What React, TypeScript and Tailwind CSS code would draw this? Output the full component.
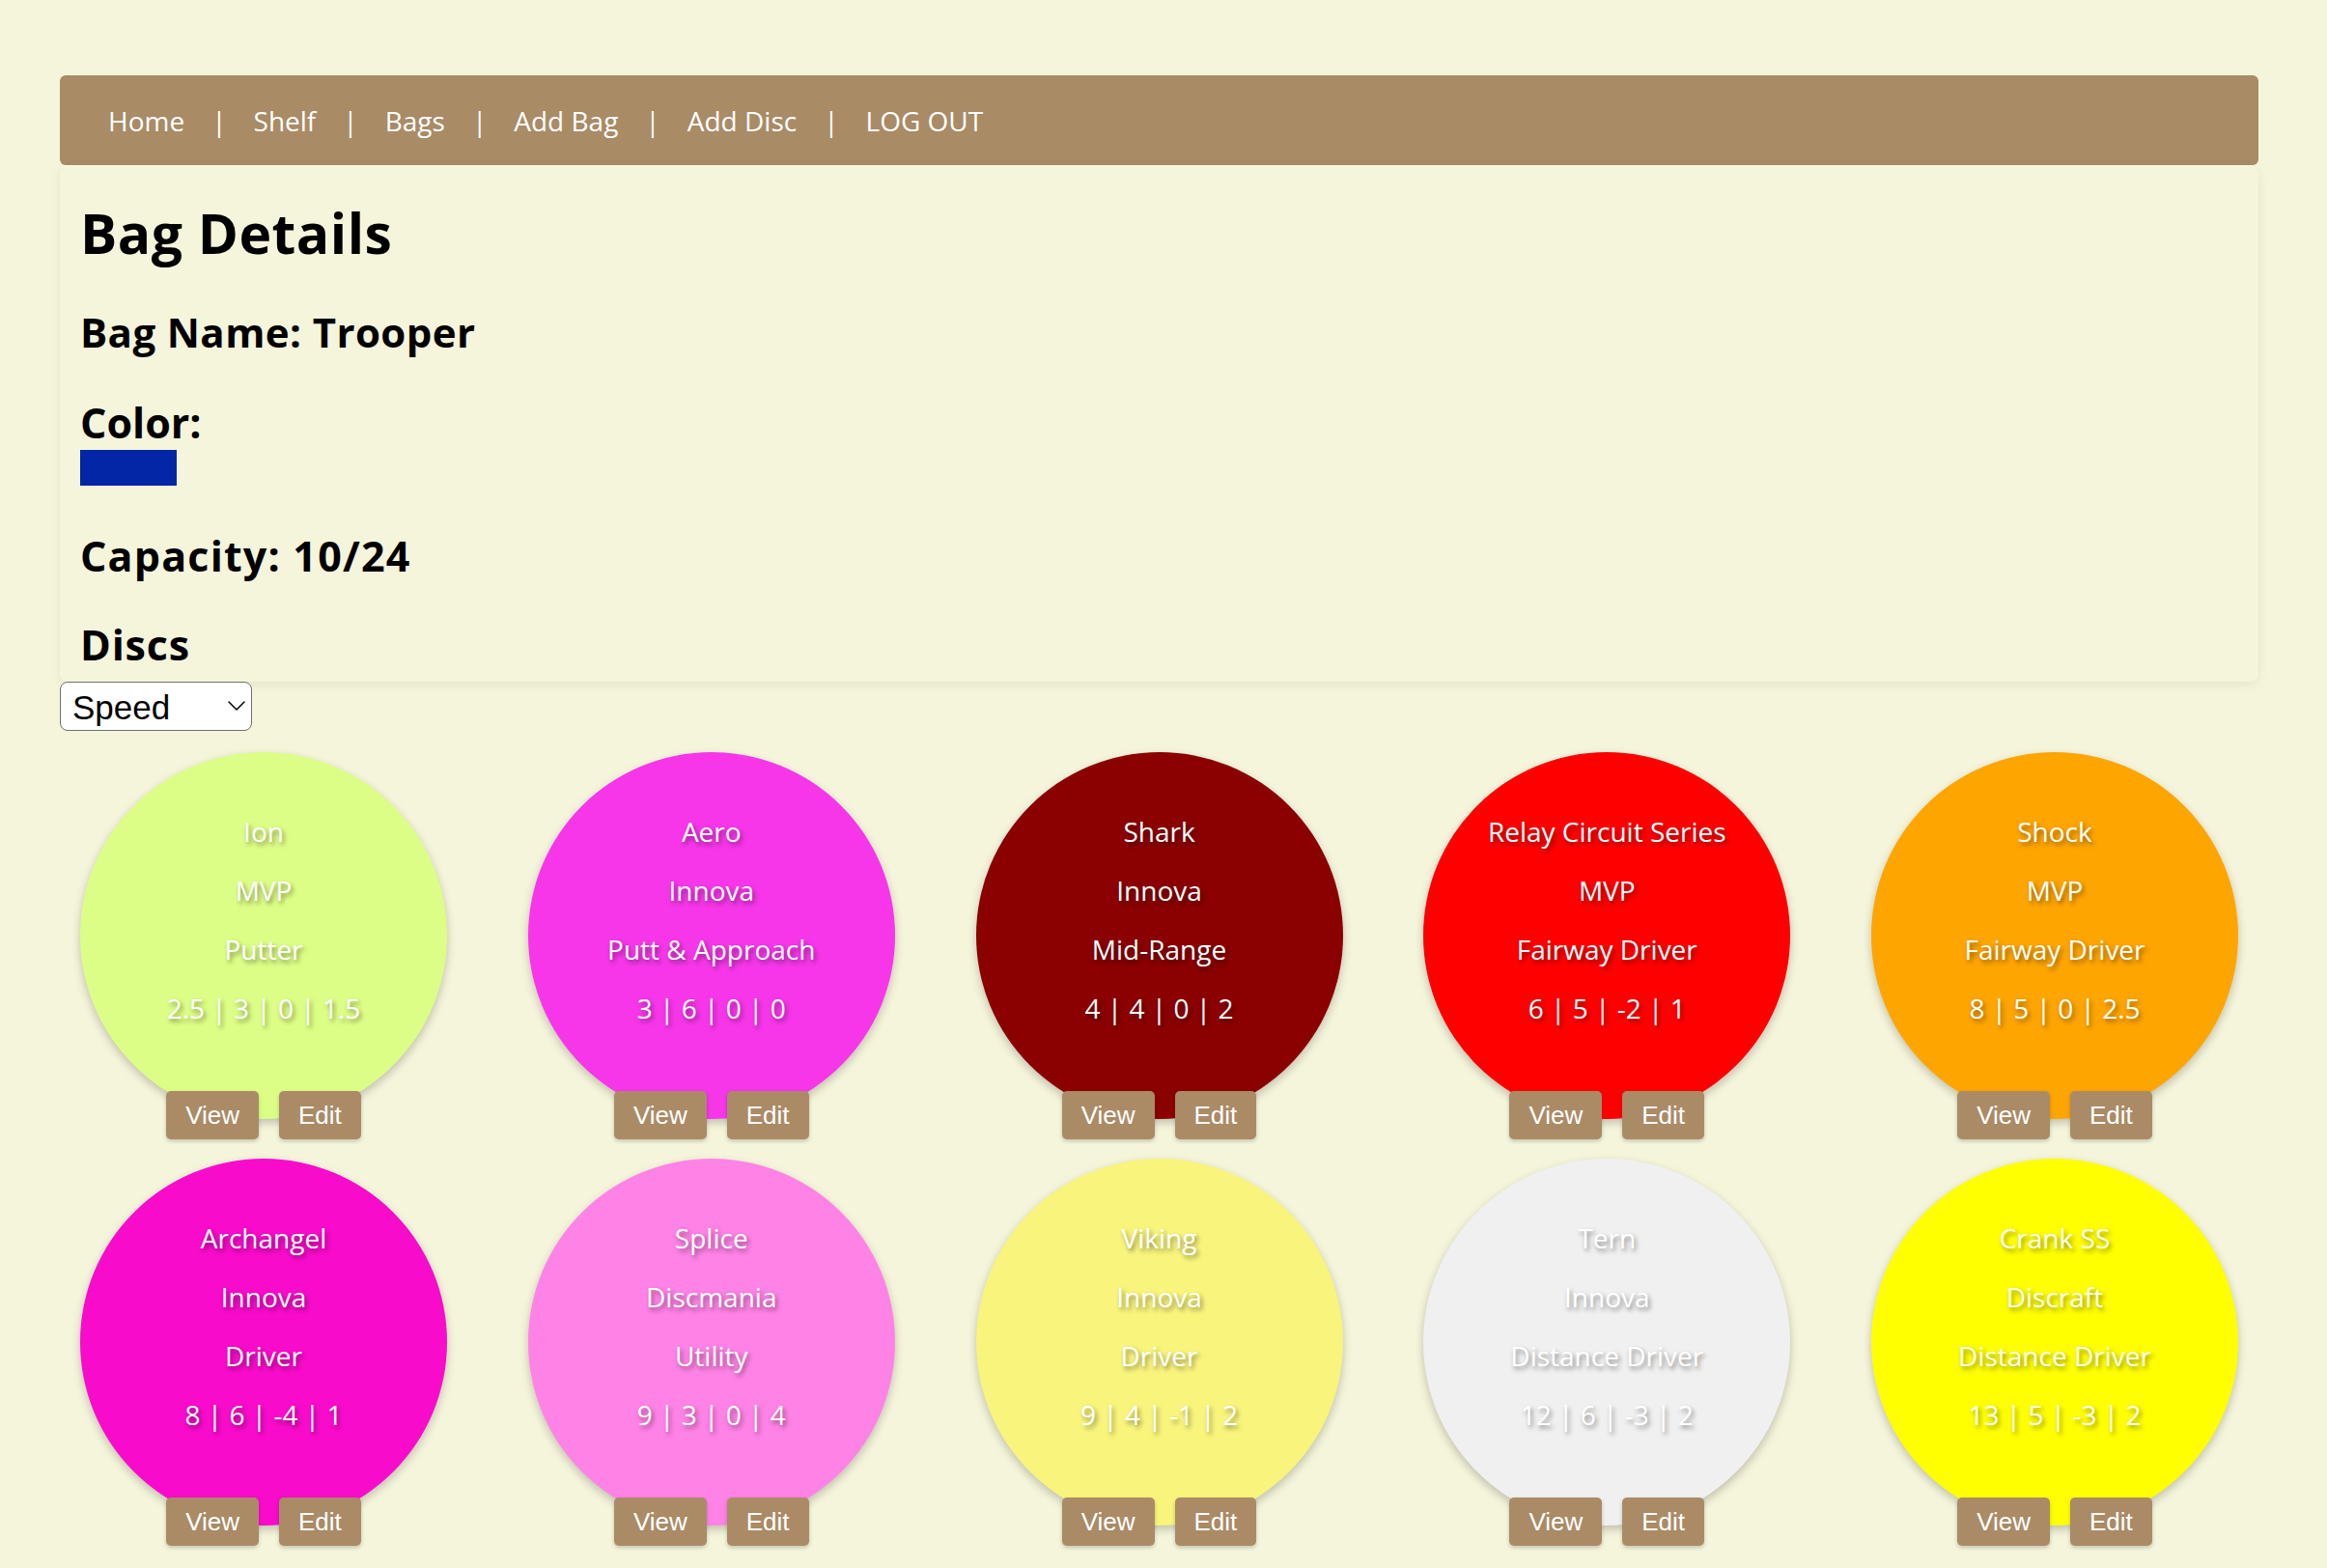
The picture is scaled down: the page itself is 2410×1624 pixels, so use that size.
import { ChevronDown } from "lucide-react";

type Disc = {
  name: string;
  brand: string;
  kind: string;
  flight: string;
  color: string;
};

const discs: Disc[] = [
  { name: "Ion", brand: "MVP", kind: "Putter", flight: "2.5 | 3 | 0 | 1.5", color: "bg-[#ddfe86]" },
  { name: "Aero", brand: "Innova", kind: "Putt & Approach", flight: "3 | 6 | 0 | 0", color: "bg-[#f736ea]" },
  { name: "Shark", brand: "Innova", kind: "Mid-Range", flight: "4 | 4 | 0 | 2", color: "bg-[#8b0000]" },
  { name: "Relay Circuit Series", brand: "MVP", kind: "Fairway Driver", flight: "6 | 5 | -2 | 1", color: "bg-[#ff0000]" },
  { name: "Shock", brand: "MVP", kind: "Fairway Driver", flight: "8 | 5 | 0 | 2.5", color: "bg-[#ffa500]" },
  { name: "Archangel", brand: "Innova", kind: "Driver", flight: "8 | 6 | -4 | 1", color: "bg-[#f90bcb]" },
  { name: "Splice", brand: "Discmania", kind: "Utility", flight: "9 | 3 | 0 | 4", color: "bg-[#ff82e6]" },
  { name: "Viking", brand: "Innova", kind: "Driver", flight: "9 | 4 | -1 | 2", color: "bg-[#f8f47c]" },
  { name: "Tern", brand: "Innova", kind: "Distance Driver", flight: "12 | 6 | -3 | 2", color: "bg-[#f0f0f0]" },
  { name: "Crank SS", brand: "Discraft", kind: "Distance Driver", flight: "13 | 5 | -3 | 2", color: "bg-[#ffff00]" },
];

const navLinks = ["Home", "Shelf", "Bags", "Add Bag", "Add Disc", "LOG OUT"];

function DiscCard({ disc }: { disc: Disc }) {
  return (
    <div className="flex flex-col items-center w-[380px]">
      <div
        className={`${disc.color} w-[380px] h-[380px] rounded-full shadow-[0_4px_10px_rgba(0,0,0,0.22)] flex flex-col items-center pt-[65px] gap-[27px] text-white text-[28px] leading-[34px] [text-shadow:2px_3px_5px_rgba(0,0,0,0.45)]`}
      >
        <p>{disc.name}</p>
        <p>{disc.brand}</p>
        <p>{disc.kind}</p>
        <p>{disc.flight}</p>
      </div>
      <div className="relative flex gap-[21px] mt-[-29px] font-['Liberation_Sans',Arial,sans-serif]">
        <button className="h-[50px] px-[20px] rounded-[5px] bg-[#aa8b66] text-white text-[26px] shadow-[0_2px_4px_rgba(0,0,0,0.2)]">
          View
        </button>
        <button className="h-[50px] px-[20px] rounded-[5px] bg-[#aa8b66] text-white text-[26px] shadow-[0_2px_4px_rgba(0,0,0,0.2)]">
          Edit
        </button>
      </div>
    </div>
  );
}

export default function App() {
  return (
    <div className="min-h-screen bg-[#f5f5dc] pl-[62px] pr-[71px] pt-[78px] pb-[40px] font-['Open_Sans','Noto_Sans',sans-serif] text-black">
      {/* NAV BAR */}
      <nav className="h-[93px] bg-[#a98b66] rounded-[6px] flex items-center pl-[50px] gap-[28px] text-white text-[28px] leading-[38px]">
        {navLinks.map((link, i) => (
          <div key={link} className="flex items-center gap-[28px]">
            {i > 0 && <span>|</span>}
            <a href="#" className="text-white">
              {link}
            </a>
          </div>
        ))}
      </nav>

      {/* BAG DETAILS CARD */}
      <section className="rounded-[8px] shadow-[0_3px_12px_rgba(0,0,0,0.07)] pl-[21px] pt-[36px] pb-[13px] flex flex-col">
        <h1 className="text-[57px] leading-[68px] font-bold tracking-[0.5px]">Bag Details</h1>
        <h2 className="mt-[44px] text-[42px] leading-[50px] font-bold tracking-[0.4px]">Bag Name: Trooper</h2>
        <h2 className="mt-[44px] text-[43px] leading-[50px] font-bold">Color:</h2>
        <div className="mt-[3px] w-[100px] h-[37px] bg-[#0326a6]"></div>
        <h2 className="mt-[48px] text-[43px] leading-[50px] font-bold tracking-[1.2px]">Capacity: 10/24</h2>
        <h2 className="mt-[42px] text-[43px] leading-[50px] font-bold tracking-[0.8px]">Discs</h2>
      </section>

      {/* SORT SELECT */}
      <div className="relative w-[199px] h-[51px]">
        <select className="appearance-none w-full h-full bg-white border-[1.5px] border-[#6f6f6f] rounded-[8px] pl-[12px] text-[35px] font-['Liberation_Sans',Arial,sans-serif] text-black">
          <option>Speed</option>
          <option>Glide</option>
          <option>Turn</option>
          <option>Fade</option>
        </select>
        <ChevronDown
          className="absolute left-[167px] top-[9px] w-[32px] h-[32px] text-black pointer-events-none"
          strokeWidth={1.1}
        />
      </div>

      {/* DISC GRID */}
      <div className="mt-[22px] px-[21px] flex flex-wrap justify-between gap-y-[20px]">
        {discs.map((d) => (
          <DiscCard key={d.name} disc={d} />
        ))}
      </div>
    </div>
  );
}
